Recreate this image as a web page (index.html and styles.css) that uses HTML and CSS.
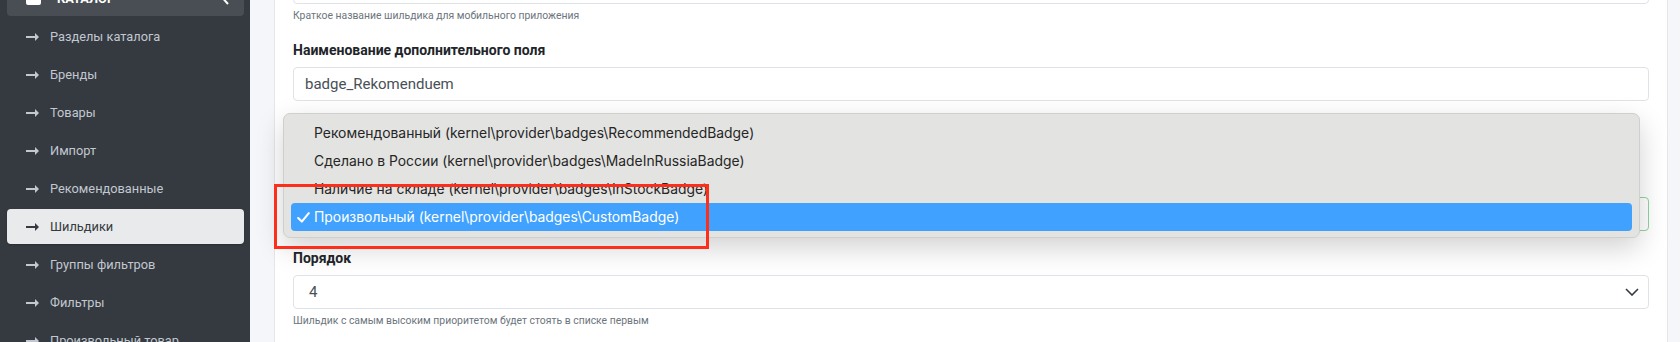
FILE: index.html
```html
<!DOCTYPE html>
<html lang="ru">
<head>
  <meta charset="UTF-8" />
  <meta name="viewport" content="width=device-width, initial-scale=1" />
  <title>Шильдики - Админ</title>
  <link rel="stylesheet" href="styles.css">
</head>
<body>
  <div class="layout">
    <aside class="sidebar">
      <ul class="nav">
        <li class="nav-item nav-open">
          <a href="#">
            <span class="nav-square"></span>
            <span class="nav-text">КАТАЛОГ</span>
            <svg class="nav-chevron" width="8" height="12" viewBox="0 0 8 12"><path d="M6 1 1.5 6 6 11" fill="none" stroke="#fff" stroke-width="2"/></svg>
          </a>
        </li>
        <li class="nav-item"><a href="#"><svg class="nav-arrow" width="13" height="8" viewBox="0 0 13 8"><path d="M0 3h9V0l4 4-4 4V5H0z" fill="currentColor"/></svg>Разделы каталога</a></li>
        <li class="nav-item"><a href="#"><svg class="nav-arrow" width="13" height="8" viewBox="0 0 13 8"><path d="M0 3h9V0l4 4-4 4V5H0z" fill="currentColor"/></svg>Бренды</a></li>
        <li class="nav-item"><a href="#"><svg class="nav-arrow" width="13" height="8" viewBox="0 0 13 8"><path d="M0 3h9V0l4 4-4 4V5H0z" fill="currentColor"/></svg>Товары</a></li>
        <li class="nav-item"><a href="#"><svg class="nav-arrow" width="13" height="8" viewBox="0 0 13 8"><path d="M0 3h9V0l4 4-4 4V5H0z" fill="currentColor"/></svg>Импорт</a></li>
        <li class="nav-item"><a href="#"><svg class="nav-arrow" width="13" height="8" viewBox="0 0 13 8"><path d="M0 3h9V0l4 4-4 4V5H0z" fill="currentColor"/></svg>Рекомендованные</a></li>
        <li class="nav-item active"><a href="#"><svg class="nav-arrow" width="13" height="8" viewBox="0 0 13 8"><path d="M0 3h9V0l4 4-4 4V5H0z" fill="currentColor"/></svg>Шильдики</a></li>
        <li class="nav-item"><a href="#"><svg class="nav-arrow" width="13" height="8" viewBox="0 0 13 8"><path d="M0 3h9V0l4 4-4 4V5H0z" fill="currentColor"/></svg>Группы фильтров</a></li>
        <li class="nav-item"><a href="#"><svg class="nav-arrow" width="13" height="8" viewBox="0 0 13 8"><path d="M0 3h9V0l4 4-4 4V5H0z" fill="currentColor"/></svg>Фильтры</a></li>
        <li class="nav-item"><a href="#"><svg class="nav-arrow" width="13" height="8" viewBox="0 0 13 8"><path d="M0 3h9V0l4 4-4 4V5H0z" fill="currentColor"/></svg>Произвольный товар</a></li>
      </ul>
    </aside>

    <main class="content">
      <div class="card">
        <form class="card-body">
          <div class="form-group">
            <input class="form-control" type="text" value="Рекомендуем" />
            <small class="form-text">Краткое название шильдика для мобильного приложения</small>
          </div>

          <div class="form-group">
            <label class="form-label">Наименование дополнительного поля</label>
            <input class="form-control" type="text" value="badge_Rekomenduem" />
          </div>

          <div class="form-group form-check">
            <span class="check-box"></span>
          </div>

          <div class="form-group">
            <div class="label-space"></div>
            <div class="select-wrap">
              <div class="form-control form-select is-valid" aria-label="Провайдер">
                <span></span>
                <svg class="select-chevron" width="14" height="8" viewBox="0 0 14 8"><path d="M1 1l6 6 6-6" fill="none" stroke="#343a40" stroke-width="1.6"/></svg>
              </div>

              <!-- открытый список select -->
              <ul class="select-menu">
                <li>Рекомендованный (kernel\provider\badges\RecommendedBadge)</li>
                <li>Сделано в России (kernel\provider\badges\MadeInRussiaBadge)</li>
                <li>Наличие на складе (kernel\provider\badges\InStockBadge)</li>
                <li class="selected">
                  <svg class="check" width="13" height="11" viewBox="0 0 13 11"><path d="M1.2 6 4.8 9.6 11.8 1.2" fill="none" stroke="#fff" stroke-width="2.1" stroke-linecap="round" stroke-linejoin="round"/></svg>
                  Произвольный (kernel\provider\badges\CustomBadge)
                </li>
              </ul>

              <div class="annotation"></div>
            </div>
          </div>

          <div class="form-group">
            <label class="form-label">Порядок</label>
            <div class="form-control form-select">
              <span>4</span>
              <svg class="select-chevron" width="14" height="8" viewBox="0 0 14 8"><path d="M1 1l6 6 6-6" fill="none" stroke="#343a40" stroke-width="1.6"/></svg>
            </div>
            <small class="form-text">Шильдик с самым высоким приоритетом будет стоять в списке первым</small>
          </div>
        </form>
      </div>
    </main>
  </div>
</body>
</html>
```

FILE: styles.css
```css
body {
  margin: 0;
  font-family: Roboto, "Noto Sans", sans-serif;
  background: #f4f6f9;
  overflow: hidden;
}
.layout {
  display: flex;
  height: 342px;
}
.sidebar {
  width: 250px;
  flex-shrink: 0;
  background: #343a40;
  padding: 0 6px 0 7px;
  box-sizing: border-box;
}
.nav {
  list-style: none;
  margin: -19px 0 0;
  padding: 0;
}
.nav-item {
  margin-bottom: 3px;
}
.nav-item a {
  display: flex;
  align-items: center;
  height: 35px;
  padding-left: 19px;
  border-radius: 4px;
  color: #c2c7d0;
  text-decoration: none;
  font-size: 12.8px;
}
.nav-arrow {
  margin-right: 11px;
  flex-shrink: 0;
}
.nav-open a {
  background: #494e54;
  color: #fff;
  font-weight: bold;
}
.nav-square {
  width: 15px;
  height: 12px;
  background: #fff;
  border-radius: 2px;
  margin-right: 16px;
}
.nav-text {
  flex: 1;
}
.nav-chevron {
  margin-right: 14px;
}
.nav-item.active a {
  background: #e9eaeb;
  color: #343a40;
  box-shadow: 0 1px 2px rgba(0,0,0,0.2);
}
.content {
  flex: 1;
  padding: 0 12px 0 24px;
}
.card {
  margin-top: -30px;
  background: #fff;
  border-left: 1px solid #e4e6e9;
  border-right: 1px solid #e4e6e9;
  height: 400px;
}
.card-body {
  padding: 0 18px;
}
.form-group {
  margin-bottom: 17px;
}
.form-label {
  display: block;
  font-size: 14px;
  line-height: 20px;
  font-weight: bold;
  color: #212529;
  margin-bottom: 7px;
}
.label-space {
  height: 20px;
  margin-bottom: 7px;
}
.form-control {
  display: flex;
  align-items: center;
  width: 100%;
  height: 34px;
  box-sizing: border-box;
  padding: 0 11px;
  border: 1px solid #dfe3e8;
  border-radius: 4px;
  font-family: inherit;
  font-size: 15px;
  color: #495057;
  background: #fff;
}
.form-select {
  justify-content: space-between;
  padding: 0 9px 0 15px;
}
.form-select.is-valid {
  border-color: #8fd3a0;
}
.form-text {
  display: block;
  margin-top: 5px;
  font-size: 10.4px;
  line-height: 14px;
  color: #6c757d;
}
.form-check {
  height: 35px;
  display: flex;
  align-items: center;
}
.check-box {
  width: 14px;
  height: 14px;
  border: 1px solid #adb5bd;
  border-radius: 3px;
}
.select-wrap {
  position: relative;
}
.select-menu {
  position: absolute;
  top: -84px;
  left: -10px;
  right: 9px;
  margin: 0;
  padding: 5px 7px 6px;
  list-style: none;
  background: #e3e3e1;
  border: 1px solid #cfcfcd;
  border-radius: 7px;
  box-shadow: 0 10px 28px rgba(0,0,0,0.18);
  font-family: Inter, "Liberation Sans", sans-serif;
  font-size: 13.9px;
  color: #262626;
}
.select-menu li {
  position: relative;
  height: 28px;
  line-height: 28px;
  padding-left: 23px;
  border-radius: 4px;
}
.select-menu li.selected {
  background: #40a2fe;
  color: #fff;
}
.check {
  position: absolute;
  left: 6px;
  top: 9px;
}
.annotation {
  position: absolute;
  left: -19px;
  top: -13px;
  width: 435px;
  height: 65px;
  box-sizing: border-box;
  border: 3px solid #fb2f1c;
}
```
